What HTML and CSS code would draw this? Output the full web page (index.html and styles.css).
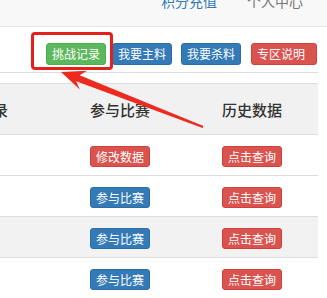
FILE: index.html
```html
<!DOCTYPE html>
<html lang="zh-CN">
<head>
<meta charset="utf-8">
<title>专区</title>
<link rel="stylesheet" href="styles.css">
</head>
<body>
<div class="navbar">
  <ul class="nav">
    <li><a class="nav-link active">积分充值</a></li>
    <li><a class="nav-link">个人中心</a></li>
  </ul>
</div>
<div class="toolbar">
  <span class="btn btn-green">挑战记录</span>
  <span class="btn btn-blue gap-s">我要主料</span>
  <span class="btn btn-blue gap-m">我要杀料</span>
  <span class="btn btn-red btn-wide gap-m">专区说明</span>
</div>
<div class="table-wrap">
  <table class="grid">
    <thead>
      <tr><th>挑战记录</th><th>参与比赛</th><th>历史数据</th></tr>
    </thead>
    <tbody>
      <tr><td></td><td><span class="btn btn-red">修改数据</span></td><td><span class="btn btn-red">点击查询</span></td></tr>
      <tr><td></td><td><span class="btn btn-blue">参与比赛</span></td><td><span class="btn btn-red">点击查询</span></td></tr>
      <tr class="shade"><td></td><td><span class="btn btn-blue">参与比赛</span></td><td><span class="btn btn-red">点击查询</span></td></tr>
      <tr><td></td><td><span class="btn btn-blue">参与比赛</span></td><td><span class="btn btn-red">点击查询</span></td></tr>
    </tbody>
  </table>
</div>
<div class="highlight"></div>
<svg class="arrow" width="327" height="298" viewBox="0 0 327 298">
  <polygon points="61,72 87,70.8 79.6,75.2 203.4,126.1 202.6,127.9 76.2,81.2 79.8,89.6" fill="#ec2a20"/>
</svg>
</body>
</html>
```
FILE: styles.css
```css
html, body {
  margin: 0;
  padding: 0;
}
body {
  font-family: "Noto Sans CJK SC", "Microsoft YaHei", sans-serif;
  color: #333;
  background: #fff;
  overflow: hidden;
  width: 327px;
  height: 298px;
  position: relative;
}
.navbar {
  height: 26px;
  background: #f8f8f8;
  border-bottom: 1px solid #e7e7e7;
  overflow: hidden;
}
.nav {
  display: flex;
  justify-content: flex-end;
  list-style: none;
  margin: -9px 9px 0 0;
  padding: 0;
}
.nav-link {
  display: block;
  padding: 0 15px;
  font-size: 14px;
  line-height: 20px;
  color: #777;
}
.nav-link.active {
  color: #337ab7;
}
.toolbar {
  width: 318px;
  box-sizing: border-box;
  display: flex;
  justify-content: flex-end;
  padding: 16px 1px 7px 0;
  border-bottom: 1px solid #ddd;
}
.btn {
  display: inline-block;
  font-size: 12px;
  line-height: 18px;
  padding: 1px 5px;
  border: 1px solid transparent;
  border-radius: 3px;
  color: #fff;
  white-space: nowrap;
}
.btn-green { background: #5cb85c; border-color: #4cae4c; }
.btn-blue { background: #337ab7; border-color: #2e6da4; }
.btn-red { background: #d9534f; border-color: #d43f3a; }
.btn-wide { padding-right: 11px; }
.gap-s { margin-left: 6px; }
.gap-m { margin-left: 9px; }
.toolbar .btn-red { margin-left: 10px; }
.table-wrap {
  margin: 10px 0 0 -98px;
  width: 416px;
}
.grid {
  width: 416px;
  border-collapse: collapse;
  table-layout: fixed;
}
.grid th:first-child, .grid td:first-child { width: 152px; }
.grid th {
  background: #f1f1f1;
  border-top: 1px solid #ddd;
  height: 50px;
  padding: 0;
  font-size: 15px;
  font-weight: 500;
  text-align: center;
  vertical-align: middle;
}
.grid td {
  border-top: 1px solid #ddd;
  height: 40px;
  padding: 0;
  text-align: center;
  vertical-align: middle;
}
.grid td .btn { line-height: 17px; }
.grid tr.shade td { background: #f2f2f2; }
.highlight {
  position: absolute;
  left: 31px;
  top: 32px;
  width: 82px;
  height: 38px;
  box-sizing: border-box;
  border: 3px solid #e3211c;
  border-radius: 4px;
}
.arrow {
  position: absolute;
  left: 0;
  top: 0;
  pointer-events: none;
}
```
